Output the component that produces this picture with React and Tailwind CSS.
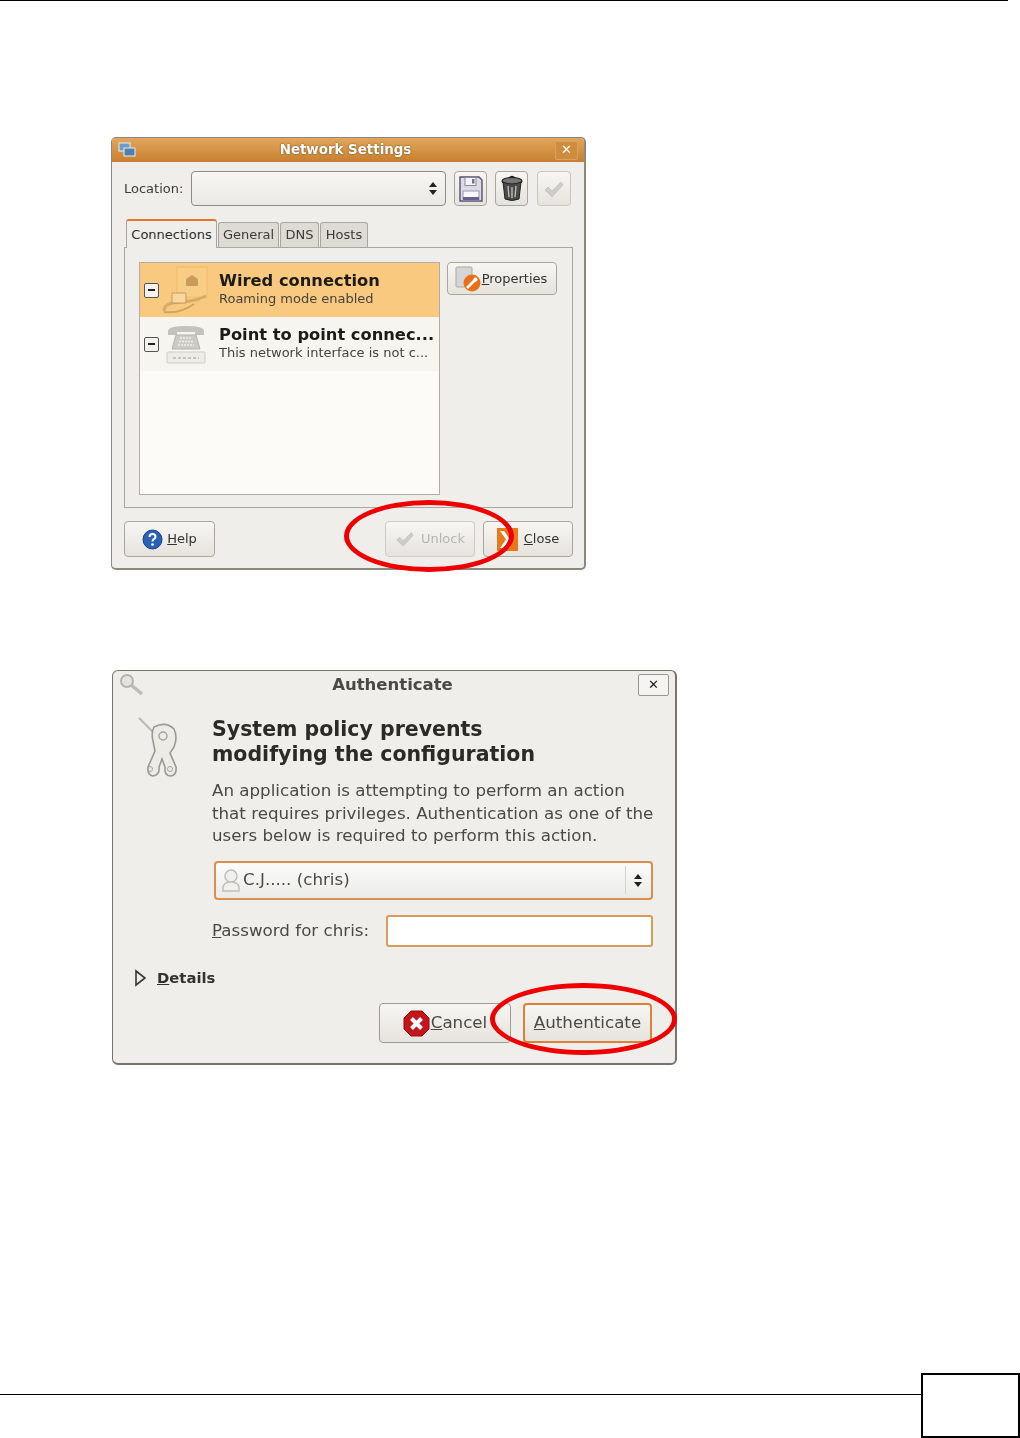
const Floppy = () => (
  <svg width="24" height="26" viewBox="0 0 24 26">
    <path d="M1 1h19l3 3v21H1z" fill="#dcdae4" stroke="#55506e" strokeWidth="1.4" />
    <rect x="6" y="1.5" width="11" height="8" fill="#f4f3f6" stroke="#8a86a0" />
    <rect x="13" y="3" width="2.5" height="4.5" fill="#77738c" />
    <rect x="4" y="15" width="16" height="9" fill="#f8f8fa" stroke="#9a96ad" />
    <rect x="4" y="21" width="16" height="3" fill="#6a5f8e" />
  </svg>
);

const Trash = () => (
  <svg width="24" height="27" viewBox="0 0 24 27">
    <ellipse cx="12" cy="6" rx="10" ry="3.5" fill="#777" stroke="#222" strokeWidth="1.2" />
    <path d="M9 3q3-3 6 0" fill="none" stroke="#222" strokeWidth="1.4" />
    <path d="M3 7l2 17q7 3 14 0l2-17q-9 4-18 0z" fill="#4a4a46" stroke="#222" />
    <path d="M8 11l1 11M12 12v11M16 11l-1 11" stroke="#bbb" strokeWidth="1.4" />
  </svg>
);

const Check = ({ size = 22, color = '#cfccc6' }) => (
  <svg width={size} height={size} viewBox="0 0 22 22">
    <path d="M2 12l3-3 4 4 9-9 2 3-11 12z" fill={color} stroke="#bdbab3" strokeWidth="0.6" />
  </svg>
);

const WiredIcon = () => (
  <svg width="48" height="50" viewBox="0 0 48 50">
    <rect x="15" y="2" width="30" height="30" fill="#f8cd85" stroke="#f3bd6c" />
    <path d="M30 10l6 4v7h-12v-7z" fill="#c99c5c" />
    <path d="M2 46q0-6 8-8l18-2q8-1 16-5" fill="none" stroke="#d6aa68" strokeWidth="3" />
    <path d="M10 28h14v10h-14z" fill="#f9d79f" stroke="#c89a58" />
    <path d="M2 47q16 2 30-8" fill="none" stroke="#cfa362" strokeWidth="2" />
  </svg>
);

const PhoneIcon = () => (
  <svg width="42" height="42" viewBox="0 0 42 42">
    <path d="M3 8q0-5 18-5t18 5v4h-9v-3h-18v3h-9z" fill="#c4c2bd" />
    <path d="M11 12h20l4 14h-28z" fill="#cdcbc6" stroke="#b5b3ae" />
    <path d="M15 15h12M14 18.500h14M13 22h16" stroke="#efeeea" strokeWidth="1.500" strokeDasharray="2 1" />
    <rect x="2" y="29" width="38" height="11" rx="1" fill="#eeece7" stroke="#cfcdc8" />
    <path d="M8 35h26" stroke="#b9b7b2" strokeWidth="1.500" strokeDasharray="3 2" />
  </svg>
);

const PropsIcon = () => (
  <svg width="28" height="28" viewBox="0 0 28 28">
    <rect x="2" y="2" width="16" height="20" rx="1" fill="#d5d5d6" stroke="#a9a9ab" />
    <circle cx="18" cy="18" r="8.500" fill="#e8701a" />
    <path d="M13 23l8-8" stroke="#fff" strokeWidth="2.600" />
    <circle cx="21.500" cy="14.500" r="2" fill="#fff" />
  </svg>
);

const HelpIcon = () => (
  <svg width="21" height="21" viewBox="0 0 21 21">
    <circle cx="10.500" cy="10.500" r="9.500" fill="#2a62b4" stroke="#17407f" />
    <path d="M7.500 8q0-3 3-3t3 2.700q0 1.600-2 2.600-1 .6-1 2.200" fill="none" stroke="#fff" strokeWidth="2" />
    <circle cx="10.500" cy="15.500" r="1.300" fill="#fff" />
  </svg>
);

const CloseIcon = () => (
  <svg width="21" height="23" viewBox="0 0 21 23">
    <rect x="0" y="0" width="21" height="23" fill="#e8781c" />
    <path d="M3 3h4l6 8.500-6 8.500h-4l6-8.500z" fill="#fff" />
  </svg>
);

const SmallKey = () => (
  <svg width="26" height="24" viewBox="0 0 26 24">
    <circle cx="8" cy="8" r="6" fill="#e5e3df" stroke="#b5b3ae" strokeWidth="2" />
    <path d="M12 12l11 9" stroke="#bdbbb6" strokeWidth="3.500" />
  </svg>
);

const Keys = () => (
  <svg width="42" height="62" viewBox="0 0 42 62">
    <path d="M1 1l14 14" stroke="#b9b7b1" strokeWidth="2" />
    <path d="M16 10q12-6 20 2 4 8 0 18l-4 6 6 14q1 8-5 9-7 0-6-9l-3-8-3 8q1 8-6 9-6-1-5-9l7-16-2-10q-2-8 1-14z" fill="#edebe6" stroke="#9a9892" strokeWidth="1.600" />
    <circle cx="25" cy="19" r="4" fill="none" stroke="#a5a39d" strokeWidth="1.500" />
    <circle cx="12" cy="52" r="2.500" fill="none" stroke="#a5a39d" />
    <circle cx="32" cy="52" r="2.500" fill="none" stroke="#a5a39d" />
  </svg>
);

const UserIcon = () => (
  <svg width="20" height="24" viewBox="0 0 20 24">
    <circle cx="10" cy="8" r="6" fill="#f1f0ed" stroke="#c0beb9" strokeWidth="1.500" />
    <path d="M2 23v-4q1-5 8-5t8 5v4z" fill="#f1f0ed" stroke="#c0beb9" strokeWidth="1.500" />
  </svg>
);

const CancelIcon = () => (
  <svg width="27" height="27" viewBox="0 0 27 27">
    <path d="M8 1h11l7 7v11l-7 7h-11l-7-7v-11z" fill="#c4141c" stroke="#8f1015" />
    <path d="M8.500 8.500l10 10M18.500 8.500l-10 10" stroke="#fff" strokeWidth="4" />
  </svg>
);

const Stepper = () => (
  <span className="flex flex-col gap-[3px] items-center">
    <span className="w-0 h-0 border-x-[4px] border-x-transparent border-b-[5px] border-b-[#222]" />
    <span className="w-0 h-0 border-x-[4px] border-x-transparent border-t-[5px] border-t-[#222]" />
  </span>
);

const Expander = () => (
  <span className="w-[15px] h-[15px] shrink-0 border border-[#55534d] rounded-[2px] bg-[#f4f2ee] flex items-center justify-center">
    <span className="w-[7px] h-[2px] bg-[#222]" />
  </span>
);

const Button = ({ className = '', children }) => (
  <div className={`h-[36px] rounded-[4px] border border-[#a9a69d] bg-gradient-to-b from-[#f7f6f3] to-[#e6e3dd] flex items-center justify-center text-[13px] text-[#33322f] ${className}`}>
    {children}
  </div>
);

const Tab = ({ className, children }) => (
  <div className={`h-[25px] bg-[#dedbd5] border border-b-0 border-[#aaa79f] rounded-t-[3px] flex items-center justify-center text-[13px] text-[#3c3b38] ${className}`}>
    {children}
  </div>
);

const ConnectionRow = ({ active, icon, title, sub }) => (
  <div className={`h-[54px] flex items-center ${active ? 'bg-[#f8c97e]' : 'bg-[#f7f5f0]'}`}>
    <div className="w-[79px] pl-[4px] flex items-center gap-[2px]">
      <Expander />
      <div className="w-[50px] flex justify-center">{icon}</div>
    </div>
    <div className="min-w-0 -mt-[3px]">
      <div className="text-[16.300px] leading-[21px] font-bold text-[#1c1b18] whitespace-nowrap">{title}</div>
      <div className="text-[13px] leading-[16px] text-[#45433e] whitespace-nowrap">{sub}</div>
    </div>
  </div>
);

const NetworkSettings = () => (
  <div className="relative w-[475px] h-[433px] ml-[111px] mt-[136px]">
    <div className="w-full h-full flex flex-col border border-[#8b887f] border-r-2 border-b-2 rounded-[5px] bg-[#f0eeea] overflow-hidden blur-[0.7px]">
      <div className="h-[24px] shrink-0 flex items-center justify-between px-[6px] bg-gradient-to-b from-[#e3a65a] to-[#c67f2e]">
        <svg width="18" height="16" viewBox="0 0 18 16">
          <rect x="1" y="1" width="11" height="8" fill="#6f9bc4" stroke="#e9edf0" />
          <rect x="6" y="6" width="11" height="8" fill="#4f80b3" stroke="#e9edf0" />
        </svg>
        <span className="text-[13.400px] font-bold text-white [text-shadow:0_0_2px_#6b4a1e]">Network Settings</span>
        <span className="w-[23px] h-[19px] rounded-[2px] border border-[#d9a25f] bg-[#d08c3e] flex items-center justify-center text-[13px] font-bold text-white">✕</span>
      </div>

      <div className="flex-1 px-[12px] pt-[9px] flex flex-col">
        <div className="flex items-center h-[35px]">
          <span className="w-[67px] text-[13px] text-[#3c3b38]">Location:</span>
          <div className="w-[255px] h-full rounded-[4px] border border-[#8f8c83] bg-gradient-to-b from-[#f7f6f3] to-[#ebe9e4] flex items-center justify-end pr-[8px]">
            <Stepper />
          </div>
          <Button className="w-[33px] !h-[35px] ml-[8px]"><Floppy /></Button>
          <Button className="w-[33px] !h-[35px] ml-[8px]"><Trash /></Button>
          <Button className="w-[34px] !h-[35px] ml-[9px] !border-[#c9c6bf]"><Check /></Button>
        </div>

        <div className="flex items-end mt-[13px] h-[28px] pl-[2px]">
          <div className="w-[91px] h-[29px] -mb-px z-10 bg-[#f0eeea] border border-b-0 border-[#aaa79f] border-t-2 border-t-[#e0762a] rounded-t-[3px] flex items-center justify-center text-[13px] text-[#2e2d2a]">Connections</div>
          <Tab className="w-[61px] ml-px">General</Tab>
          <Tab className="w-[39px] ml-px">DNS</Tab>
          <Tab className="w-[48px] ml-px">Hosts</Tab>
        </div>

        <div className="h-[261px] w-[449px] border border-[#aaa79f] px-[14px] pt-[14px] flex gap-[7px]">
          <div className="w-[301px] h-[233px] border border-[#b0ada5] bg-[#fdfbf8] flex flex-col">
            <ConnectionRow active icon={<WiredIcon />} title="Wired connection" sub="Roaming mode enabled" />
            <ConnectionRow icon={<PhoneIcon />} title="Point to point connec..." sub="This network interface is not c..." />
          </div>
          <Button className="w-[110px] !h-[33px] pr-[3px]"><PropsIcon /><span><u>P</u>roperties</span></Button>
        </div>

        <div className="flex mt-[13px] w-[449px]">
          <Button className="w-[91px] gap-[4px]"><HelpIcon /><span><u>H</u>elp</span></Button>
          <Button className="w-[90px] ml-auto gap-[6px] !border-[#cfccc5] !text-[#b8b5ae]"><Check size={20} /><span>Unlock</span></Button>
          <Button className="w-[90px] ml-[8px] gap-[6px]"><CloseIcon /><span><u>C</u>lose</span></Button>
        </div>
      </div>
    </div>
    <div className="absolute left-[233px] top-[363px] w-[170px] h-[72px] rounded-[50%] border-[5px] border-[#ee0000]" />
  </div>
);

const Authenticate = () => (
  <div className="relative w-[565px] h-[395px] ml-[112px] mt-[100px]">
    <div className="w-full h-full flex flex-col border border-[#77746c] border-b-2 border-r-2 rounded-[6px] bg-[#f0eeea] overflow-hidden blur-[0.7px]">
      <div className="h-[26px] shrink-0 flex items-center justify-between pl-[6px] pr-[6px] pt-[2px]">
        <SmallKey />
        <span className="ml-[2px] text-[16.500px] font-bold text-[#4a4944]">Authenticate</span>
        <span className="w-[31px] h-[22px] border border-[#9a978f] rounded-[2px] bg-[#f5f4f1] flex items-center justify-center text-[13px] font-bold text-[#222]">✕</span>
      </div>

      <div className="flex flex-1 pt-[20px]">
        <div className="w-[99px] shrink-0 pl-[25px]"><Keys /></div>
        <div className="w-[442px]">
          <div className="text-[20.500px] leading-[25px] font-bold text-[#2b2a27] whitespace-nowrap">System policy prevents<br />modifying the configuration</div>
          <div className="mt-[12px] text-[16.700px] leading-[22.500px] text-[#4a4944] whitespace-nowrap">
            An application is attempting to perform an action<br />
            that requires privileges. Authentication as one of the<br />
            users below is required to perform this action.
          </div>

          <div className="mt-[14px] ml-[2px] w-[439px] h-[39px] rounded-[4px] border-2 border-[#d9904e] bg-gradient-to-b from-[#fbfbfa] to-[#ecebe7] flex items-center pl-[5px] pr-[9px]">
            <UserIcon />
            <span className="ml-[2px] text-[16.700px] text-[#4a4944]">C.J..... (chris)</span>
            <span className="ml-auto border-l border-[#d5d3cd] h-[28px] pl-[8px] flex items-center"><Stepper /></span>
          </div>

          <div className="mt-[15px] flex items-center h-[32px]">
            <span className="w-[174px] text-[16.700px] text-[#4a4944]"><u>P</u>assword for chris:</span>
            <div className="w-[267px] h-full rounded-[3px] border-2 border-[#dc9a5c] bg-white" />
          </div>
        </div>
      </div>

      <div className="flex items-center pl-[21px] h-[18px] mb-[16px]">
        <svg width="13" height="18" viewBox="0 0 13 18">
          <path d="M2 2l9 7-9 7z" fill="#f0eeea" stroke="#3a3936" strokeWidth="1.600" />
        </svg>
        <span className="ml-[10px] text-[14.800px] font-bold text-[#33322f]"><u>D</u>etails</span>
      </div>

      <div className="flex justify-end gap-[12px] pr-[23px] mb-[20px]">
        <Button className="w-[132px] !h-[40px] gap-[1px] !text-[16.700px] !text-[#4a4944] !border-[#9f9c93]"><CancelIcon /><span><u>C</u>ancel</span></Button>
        <Button className="w-[129px] !h-[40px] !text-[16.700px] !text-[#4a4944] !border-2 !border-[#d9823a]"><span><u>A</u>uthenticate</span></Button>
      </div>
    </div>
    <div className="absolute left-[378px] top-[313px] w-[187px] h-[72px] rounded-[50%] border-[5px] border-[#ee0000]" />
  </div>
);

export default function App() {
  return (
    <div className="w-[1020px] h-[1438px] bg-white flex flex-col font-['DejaVu_Sans',sans-serif]">
      <div className="w-[1008px] h-px bg-black shrink-0" />
      <NetworkSettings />
      <Authenticate />
      <div className="mt-auto h-[65px] flex items-start shrink-0">
        <div className="w-[921px] h-px bg-black mt-[21px]" />
        <div className="w-[99px] h-[65px] border-2 border-black" />
      </div>
    </div>
  );
}
